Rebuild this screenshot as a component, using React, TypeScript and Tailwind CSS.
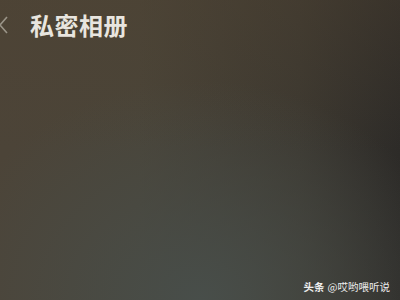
export default function App() {
  return (
    <div
      className="relative w-[400px] h-[300px] overflow-hidden"
      style={{
        background:
          "radial-gradient(ellipse 260px 220px at 200px 300px, rgba(72,78,74,1) 0%, rgba(72,78,74,0) 100%), linear-gradient(90deg, #4c4438 0%, #4a4438 35%, #3c3830 75%, #2d2b28 100%)",
        fontFamily: '"Noto Sans CJK SC", "Noto Sans", sans-serif',
      }}
    >
      <div
        className="absolute inset-0"
        style={{
          background:
            "linear-gradient(180deg, rgba(80,66,48,0.35) 0%, rgba(80,66,48,0) 50%)",
        }}
      />
      <div className="relative flex items-center h-[50px] pt-[0px]">
        <svg width="12" height="20" viewBox="0 0 12 20" className="ml-[-3px] mb-[1px]">
          <path d="M10 2 L3 10 L10 18" fill="none" stroke="#9a9488" strokeWidth="1.6" />
        </svg>
        <span className="ml-[21px] text-[24px] font-bold text-[#e8e5df] tracking-[0.5px] leading-none">
          私密相册
        </span>
      </div>
      <div className="absolute right-[10px] bottom-[8px] flex items-center text-[10.5px] text-[#eeeeee] leading-none">
        <span className="font-bold">头条</span>
        <span className="ml-[3px]">@哎哟喂听说</span>
      </div>
    </div>
  );
}
